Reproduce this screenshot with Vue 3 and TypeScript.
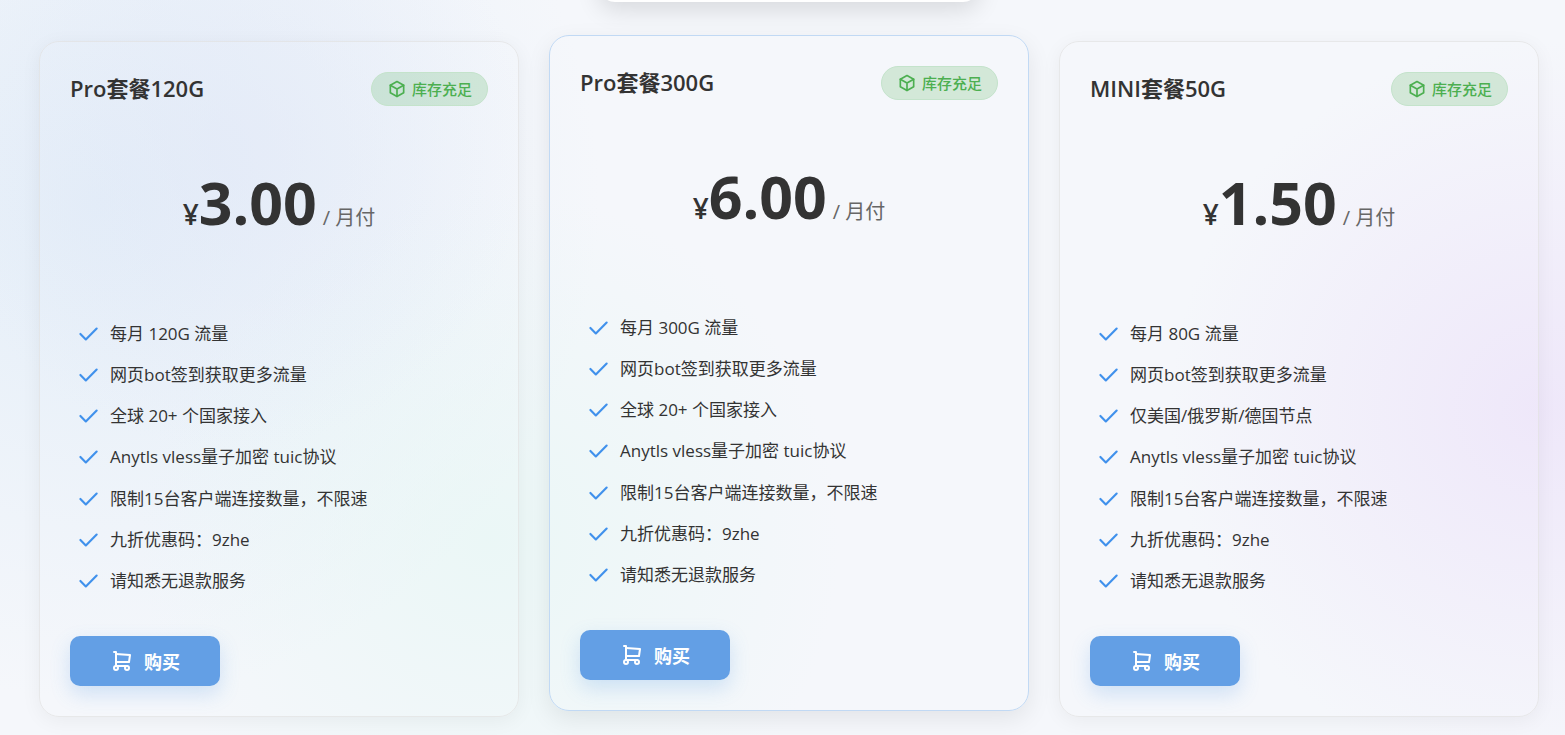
<script setup lang="ts">
interface Plan {
  name: string
  price: string
  featured: boolean
  features: string[]
}

const shared: string[] = [
  'Anytls vless量子加密 tuic协议',
  '限制15台客户端连接数量，不限速',
  '九折优惠码：9zhe',
  '请知悉无退款服务',
]

const plans: Plan[] = [
  {
    name: 'Pro套餐120G',
    price: '3.00',
    featured: false,
    features: ['每月 120G 流量', '网页bot签到获取更多流量', '全球 20+ 个国家接入', ...shared],
  },
  {
    name: 'Pro套餐300G',
    price: '6.00',
    featured: true,
    features: ['每月 300G 流量', '网页bot签到获取更多流量', '全球 20+ 个国家接入', ...shared],
  },
  {
    name: 'MINI套餐50G',
    price: '1.50',
    featured: false,
    features: ['每月 80G 流量', '网页bot签到获取更多流量', '仅美国/俄罗斯/德国节点', ...shared],
  },
]
</script>

<template>
  <main class="page">
    <div class="switcher"></div>
    <section class="plans">
      <article v-for="plan in plans" :key="plan.name" class="card" :class="{ featured: plan.featured }">
        <header class="head">
          <h2 class="name">{{ plan.name }}</h2>
          <span class="stock">
            <svg class="cube" viewBox="0 0 24 24" aria-hidden="true">
              <path d="M12 3l8 4.5v9L12 21l-8-4.5v-9L12 3" />
              <path d="M12 12l8-4.5M12 12v9M12 12L4 7.5" />
            </svg>
            库存充足
          </span>
        </header>
        <p class="price">
          <span class="currency">¥</span><span class="amount">{{ plan.price }}</span><span class="period">/ 月付</span>
        </p>
        <ul class="features">
          <li v-for="feature in plan.features" :key="feature">
            <svg class="check" viewBox="0 0 24 24" aria-hidden="true">
              <path d="M5 12l5 5L20 7" />
            </svg>
            <span>{{ feature }}</span>
          </li>
        </ul>
        <button type="button" class="buy">
          <svg class="cart" viewBox="0 0 24 24" aria-hidden="true">
            <circle cx="6" cy="19" r="2" />
            <circle cx="17" cy="19" r="2" />
            <path d="M17 17H6V3H4" />
            <path d="M6 5l14 1-1 7H6" />
          </svg>
          购买
        </button>
      </article>
    </section>
  </main>
</template>

<style>
html,
body {
  margin: 0;
  background: #f5f7fb;
}
</style>

<style scoped>
.page {
  box-sizing: border-box;
  min-height: 100vh;
  padding: 0 26px 18px 39px;
  overflow: hidden;
  font-family: 'Open Sans', 'Noto Sans CJK SC', sans-serif;
  color: #333;
  background:
    radial-gradient(circle at 230px 150px, rgba(224, 230, 247, 0.5), rgba(224, 230, 247, 0) 300px),
    radial-gradient(circle at 490px 540px, rgba(228, 247, 243, 0.6), rgba(228, 247, 243, 0) 350px),
    radial-gradient(circle at 1540px 410px, rgba(236, 226, 249, 0.75), rgba(240, 234, 252, 0) 370px),
    radial-gradient(circle at 100px 200px, rgba(222, 235, 247, 0.75), rgba(226, 238, 248, 0) 500px),
    #f5f7fb;
}

.switcher {
  width: 380px;
  height: 60px;
  margin: -58px auto 39px;
  border-radius: 16px;
  background: #fff;
  box-shadow: 0 8px 24px rgba(0, 0, 0, 0.12);
}

.plans {
  display: grid;
  grid-template-columns: repeat(3, minmax(0, 1fr));
  gap: 30px;
}

.card {
  display: flex;
  flex-direction: column;
  padding: 30px;
  border: 1px solid rgba(225, 225, 225, 0.7);
  border-radius: 20px;
  box-shadow: 0 4px 20px rgba(0, 0, 0, 0.05);
}

.card.featured {
  transform: translateY(-6px);
  border-color: #c1d9f4;
  box-shadow: 0 8px 24px rgba(0, 0, 0, 0.08);
}

.head {
  display: flex;
  align-items: center;
  justify-content: space-between;
}

.name {
  margin: 0;
  font-size: 22px;
  font-weight: 600;
  line-height: 30px;
  padding-bottom: 2px;
}

.stock {
  display: flex;
  align-items: center;
  gap: 5px;
  padding: 0 15px;
  border: 1px solid #c4e3cb;
  border-radius: 17px;
  background: rgba(76, 175, 80, 0.2);
  color: #4caf50;
  font-size: 15px;
  font-weight: 500;
  line-height: 32px;
}

svg {
  flex: none;
  fill: none;
  stroke: currentColor;
  stroke-width: 2;
  stroke-linecap: round;
  stroke-linejoin: round;
}

.cube {
  width: 20px;
  height: 20px;
}

.price {
  display: flex;
  align-items: baseline;
  justify-content: center;
  margin: 56px 0 55px;
  line-height: 80px;
}

.currency {
  font-size: 28px;
  font-weight: 600;
}

.amount {
  font-size: 59px;
  font-weight: 700;
}

.period {
  margin-left: 6px;
  color: #666;
  font-size: 20px;
}

.features {
  display: grid;
  align-content: stretch;
  min-height: 289px;
  margin: 0 0 34px;
  padding: 0;
  list-style: none;
  font-size: 17px;
  line-height: 28px;
}

.features li {
  display: flex;
  align-items: center;
  gap: 9px;
  padding-left: 5px;
}

.check {
  width: 26px;
  height: 26px;
  color: #4091ec;
}

.buy {
  display: flex;
  align-items: center;
  justify-content: center;
  align-self: flex-start;
  gap: 10px;
  width: 150px;
  height: 50px;
  padding: 0;
  border: 0;
  border-radius: 10px;
  background: #639fe5;
  box-shadow: 0 8px 20px rgba(74, 144, 226, 0.22);
  color: #fff;
  font-family: inherit;
  font-size: 18px;
  font-weight: 700;
  cursor: pointer;
}

.cart {
  width: 24px;
  height: 24px;
}
</style>
